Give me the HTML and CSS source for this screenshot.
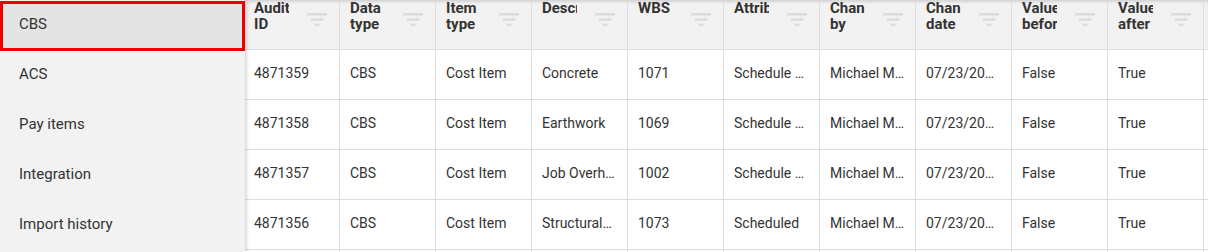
FILE: index.html
```html
<!DOCTYPE html>
<html>
<head>
<meta charset="utf-8">
<link rel="stylesheet" href="styles.css">
</head>
<body>
<div class="app">
  <nav class="sidebar">
    <div class="nav-item selected">CBS</div>
    <div class="nav-item">ACS</div>
    <div class="nav-item">Pay items</div>
    <div class="nav-item">Integration</div>
    <div class="nav-item">Import history</div>
  </nav>
  <div class="grid">
    <div class="head-row">
      <div class="hcell"><span class="label">Audit ID</span><svg class="filter" width="20" height="14" viewBox="0 0 20 14"><rect x="0" y="0" width="20" height="2.6"/><rect x="3.5" y="5.3" width="13" height="2.6"/><rect x="7.5" y="10.6" width="5" height="2.6"/></svg></div>
      <div class="hcell"><span class="label">Data type</span><svg class="filter" width="20" height="14" viewBox="0 0 20 14"><rect x="0" y="0" width="20" height="2.6"/><rect x="3.5" y="5.3" width="13" height="2.6"/><rect x="7.5" y="10.6" width="5" height="2.6"/></svg></div>
      <div class="hcell"><span class="label">Item type</span><svg class="filter" width="20" height="14" viewBox="0 0 20 14"><rect x="0" y="0" width="20" height="2.6"/><rect x="3.5" y="5.3" width="13" height="2.6"/><rect x="7.5" y="10.6" width="5" height="2.6"/></svg></div>
      <div class="hcell"><span class="label">Description</span><svg class="filter" width="20" height="14" viewBox="0 0 20 14"><rect x="0" y="0" width="20" height="2.6"/><rect x="3.5" y="5.3" width="13" height="2.6"/><rect x="7.5" y="10.6" width="5" height="2.6"/></svg></div>
      <div class="hcell"><span class="label">WBS</span><svg class="filter" width="20" height="14" viewBox="0 0 20 14"><rect x="0" y="0" width="20" height="2.6"/><rect x="3.5" y="5.3" width="13" height="2.6"/><rect x="7.5" y="10.6" width="5" height="2.6"/></svg></div>
      <div class="hcell"><span class="label">Attribute</span><svg class="filter" width="20" height="14" viewBox="0 0 20 14"><rect x="0" y="0" width="20" height="2.6"/><rect x="3.5" y="5.3" width="13" height="2.6"/><rect x="7.5" y="10.6" width="5" height="2.6"/></svg></div>
      <div class="hcell"><span class="label">Changed by</span><svg class="filter" width="20" height="14" viewBox="0 0 20 14"><rect x="0" y="0" width="20" height="2.6"/><rect x="3.5" y="5.3" width="13" height="2.6"/><rect x="7.5" y="10.6" width="5" height="2.6"/></svg></div>
      <div class="hcell"><span class="label">Changed date</span><svg class="filter" width="20" height="14" viewBox="0 0 20 14"><rect x="0" y="0" width="20" height="2.6"/><rect x="3.5" y="5.3" width="13" height="2.6"/><rect x="7.5" y="10.6" width="5" height="2.6"/></svg></div>
      <div class="hcell"><span class="label">Value before</span><svg class="filter" width="20" height="14" viewBox="0 0 20 14"><rect x="0" y="0" width="20" height="2.6"/><rect x="3.5" y="5.3" width="13" height="2.6"/><rect x="7.5" y="10.6" width="5" height="2.6"/></svg></div>
      <div class="hcell"><span class="label">Value after</span><svg class="filter" width="20" height="14" viewBox="0 0 20 14"><rect x="0" y="0" width="20" height="2.6"/><rect x="3.5" y="5.3" width="13" height="2.6"/><rect x="7.5" y="10.6" width="5" height="2.6"/></svg></div>
      <div class="hcell"></div>
    </div>
    <div class="row">
      <div class="cell">4871359</div><div class="cell">CBS</div><div class="cell">Cost Item</div><div class="cell">Concrete</div><div class="cell">1071</div><div class="cell">Schedule start date</div><div class="cell">Michael Miller</div><div class="cell">07/23/2020 10:15 AM</div><div class="cell">False</div><div class="cell">True</div><div class="cell"></div>
    </div>
    <div class="row">
      <div class="cell">4871358</div><div class="cell">CBS</div><div class="cell">Cost Item</div><div class="cell">Earthwork</div><div class="cell">1069</div><div class="cell">Schedule start date</div><div class="cell">Michael Miller</div><div class="cell">07/23/2020 10:14 AM</div><div class="cell">False</div><div class="cell">True</div><div class="cell"></div>
    </div>
    <div class="row">
      <div class="cell">4871357</div><div class="cell">CBS</div><div class="cell">Cost Item</div><div class="cell">Job Overhead</div><div class="cell">1002</div><div class="cell">Schedule start date</div><div class="cell">Michael Miller</div><div class="cell">07/23/2020 10:12 AM</div><div class="cell">False</div><div class="cell">True</div><div class="cell"></div>
    </div>
    <div class="row">
      <div class="cell">4871356</div><div class="cell">CBS</div><div class="cell">Cost Item</div><div class="cell">Structural/Steel</div><div class="cell">1073</div><div class="cell">Scheduled</div><div class="cell">Michael Miller</div><div class="cell">07/23/2020 10:10 AM</div><div class="cell">False</div><div class="cell">True</div><div class="cell"></div>
    </div>
    <div class="row">
      <div class="cell"></div><div class="cell"></div><div class="cell"></div><div class="cell"></div><div class="cell"></div><div class="cell"></div><div class="cell"></div><div class="cell"></div><div class="cell"></div><div class="cell"></div><div class="cell"></div>
    </div>
  </div>
</div>
</body>
</html>
```

FILE: styles.css
```css
* { box-sizing: border-box; }

html, body {
  margin: 0;
  padding: 0;
  height: 252px;
  overflow: hidden;
  background: #ffffff;
  font-family: Roboto, "Liberation Sans", Arial, sans-serif;
  font-size: 14px;
  color: #333333;
}

.app {
  display: flex;
  height: 252px;
  overflow: hidden;
}

.sidebar {
  flex: 0 0 245px;
  width: 245px;
  height: 252px;
  background: #f2f2f2;
  position: relative;
  z-index: 2;
  box-shadow: 1px 0 4px rgba(0, 0, 0, 0.22);
  font-size: 15px;
}

.nav-item {
  height: 50px;
  line-height: 43px;
  padding-left: 16px;
  border: 3px solid transparent;
  color: #333333;
}

.nav-item.selected {
  background: #e4e4e4;
  border-color: #ee0000;
  margin-top: 1px;
  margin-bottom: -1px;
  line-height: 41px;
}

.grid {
  flex: 1 1 auto;
  margin-left: -1px;
  overflow: hidden;
  min-width: 0;
}

.head-row,
.row {
  display: grid;
  grid-template-columns: repeat(11, 96px);
}

.head-row {
  height: 50px;
  background: #f2f2f2;
  box-shadow: inset 0 3px 3px -1px rgba(0, 0, 0, 0.13);
}

.hcell {
  display: flex;
  align-items: flex-start;
  height: 50px;
  padding-left: 10px;
  border-right: 1px solid #dddddd;
  border-bottom: 1px solid #dddddd;
}

.label {
  width: 35px;
  overflow: hidden;
  font-size: 15px;
  font-weight: 700;
  line-height: 16px;
  padding-top: 0;
  color: #333333;
  flex: 0 0 35px;
}

.filter {
  margin-left: auto;
  margin-right: 12px;
  margin-top: 13px;
  fill: #dcdcdc;
  flex: 0 0 auto;
}

.row {
  height: 50px;
  background: #ffffff;
}

.cell {
  height: 50px;
  line-height: 47px;
  padding: 0 10px;
  font-size: 14px;
  border-right: 1px solid #dddddd;
  border-bottom: 1px solid #dddddd;
  white-space: nowrap;
  overflow: hidden;
  text-overflow: ellipsis;
  color: #333333;
}
```
